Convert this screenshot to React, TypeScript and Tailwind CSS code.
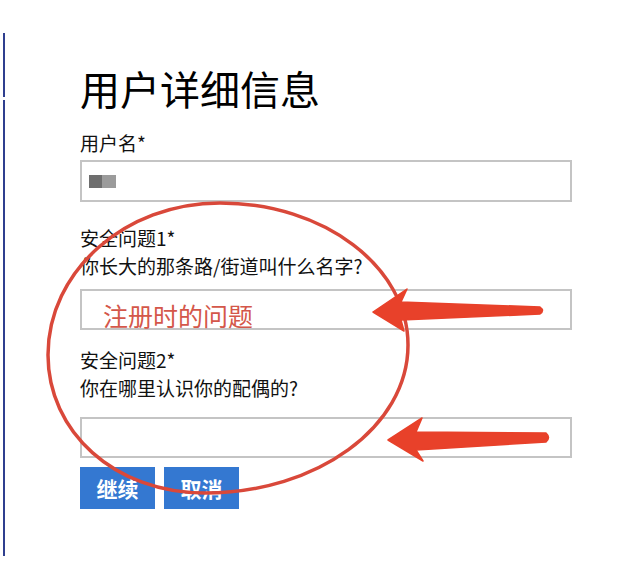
const FONT = { fontFamily: '"Noto Sans CJK SC", "Noto Sans", sans-serif' };

function Field({ children }: { children?: React.ReactNode }) {
  return (
    <div className="w-[492px] h-[41px] border-2 border-[#c4c4c4] bg-white">
      {children}
    </div>
  );
}

function Annotations() {
  return (
    <svg
      className="absolute inset-0 pointer-events-none"
      width="623"
      height="570"
      viewBox="0 0 623 570"
    >
      <path
        d="M220,203 C323.8,203 408,266.6 408,345 C408,426.7 317,493 205,493 C114,493 48,431.2 48,355 C48,271.1 125,203 220,203 Z"
        fill="none"
        stroke="#d9483a"
        strokeWidth="3.5"
      />
      <path
        d="M373,312 L407,289 L401,302 L540,307 Q545,310.5 540,314 L401,320 L404,331 Z"
        fill="#e8412a"
        stroke="#e8412a"
        strokeWidth="1.5"
        strokeLinejoin="round"
      />
      <path
        d="M388,440 L422,418 L416,432 L546,433 Q551,437.5 546,442 L416,450 L423,461 Z"
        fill="#e8412a"
        stroke="#e8412a"
        strokeWidth="1.5"
        strokeLinejoin="round"
      />
    </svg>
  );
}

export default function App() {
  return (
    <div className="relative w-[623px] h-[570px] bg-white overflow-hidden text-[#111]" style={FONT}>
      <div className="flex">
        <div className="ml-[3px] mt-[33px] flex flex-col w-[2px]">
          <div className="h-[64px] bg-[#2f3f8f]" />
          <div className="h-[3px]" />
          <div className="h-[456px] bg-[#2f3f8f]" />
        </div>

        <div className="ml-[75px] pt-[64px] flex flex-col">
          <h1 className="text-[40px] leading-[48px] font-normal text-black">用户详细信息</h1>

          <div className="mt-[17px] text-[19px] leading-[28px]">用户名*</div>
          <div className="mt-[3px] w-[492px] h-[42px] border-2 border-[#c4c4c4] flex items-center pl-[7px]">
            <div className="flex">
              <div className="w-[13px] h-[13px] bg-[#6e6e6e]" />
              <div className="w-[14px] h-[13px] bg-[#9b9b9b]" />
            </div>
          </div>

          <div className="mt-[22px] text-[19px] leading-[28px]">
            <div>安全问题1*</div>
            <div>你长大的那条路/街道叫什么名字?</div>
          </div>
          <div className="mt-[9px]">
            <Field>
              <div className="pl-[21px] pt-[12px] text-[25px] leading-[25px] text-[#d4574a] whitespace-nowrap">
                注册时的问题
              </div>
            </Field>
          </div>

          <div className="mt-[16px] text-[19px] leading-[28px]">
            <div>安全问题2*</div>
            <div>你在哪里认识你的配偶的?</div>
          </div>
          <div className="mt-[15px]">
            <Field />
          </div>

          <div className="mt-[9px] flex gap-[9px]">
            <button className="w-[75px] h-[42px] bg-[#3478d1] text-white text-[21px] leading-none font-bold">
              继续
            </button>
            <button className="w-[75px] h-[42px] bg-[#3478d1] text-white text-[21px] leading-none font-bold">
              取消
            </button>
          </div>
        </div>
      </div>

      <Annotations />
    </div>
  );
}
